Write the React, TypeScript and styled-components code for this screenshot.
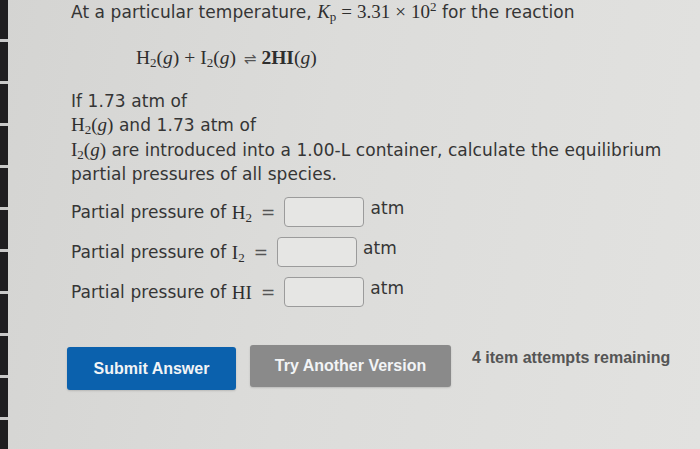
import styled, { createGlobalStyle } from 'styled-components';

const GlobalStyle = createGlobalStyle`
  html, body {
    margin: 0;
    padding: 0;
  }
  body {
    width: 700px;
    height: 449px;
    overflow: hidden;
    font-family: 'DejaVu Sans', Verdana, sans-serif;
  }
`;

const Screen = styled.div`
  display: flex;
  width: 700px;
  height: 449px;
  background: linear-gradient(100deg, #d4d4d2 0%, #dcdcda 45%, #e2e2e0 100%);
`;

const Bezel = styled.div`
  width: 8px;
  display: flex;
  flex-direction: column;
  gap: 3px;
  background: #c9c9c9;
`;

const BezelSegment = styled.div`
  height: 39px;
  flex-shrink: 0;
  background: #1f1e20;
`;

const Content = styled.div`
  flex: 1;
  padding: 0 0 0 63px;
  color: #353535;
  font-size: 17px;
  letter-spacing: 0.07px;
`;

const Line = styled.div`
  height: 24.5px;
  line-height: 24.5px;
  white-space: nowrap;
`;

const Math = styled.span<{ $italic?: boolean }>`
  font-family: 'Liberation Serif', 'Times New Roman', serif;
  font-size: 19px;
  line-height: 1;
  letter-spacing: 0;
  font-style: ${(p) => (p.$italic ? 'italic' : 'normal')};
  color: #2e2e2e;
`;

const Sub = styled.sub`
  font-size: 13px;
  line-height: 0;
  vertical-align: -3px;
  font-style: normal;
`;

const Sup = styled.sup`
  font-size: 13px;
  line-height: 0;
  vertical-align: 7px;
`;

const Op = styled.span`
  margin: 0 5px;
`;

const Equation = styled.div`
  height: 24px;
  padding: 21.5px 0 0 65px;
  line-height: 24px;
  font-family: 'Liberation Serif', 'Times New Roman', serif;
  font-size: 19.5px;
  letter-spacing: 0;
  color: #2e2e2e;
  white-space: nowrap;
`;

const Arrow = styled.span`
  font-family: 'DejaVu Sans', sans-serif;
  font-size: 15px;
  color: #555;
  margin: 0 5px 0 3px;
`;

const Paragraph = styled.div`
  margin-top: 18.75px;
`;

const Rows = styled.div`
  margin-top: 10.25px;
  display: flex;
  flex-direction: column;
  gap: 10px;
`;

const Row = styled.div`
  display: flex;
  align-items: center;
  height: 30px;
  white-space: nowrap;
`;

const Equals = styled.span`
  margin: 0 9px 0 9px;
  color: #555;
`;

const AnswerBox = styled.div`
  width: 78px;
  height: 28px;
  border: 1px solid #9b9b9b;
  border-radius: 4px;
  background: #e6e6e4;
`;

const Unit = styled.span`
  margin-left: 6px;
  position: relative;
  top: -4px;
`;

const Actions = styled.div`
  display: flex;
  align-items: flex-start;
  margin: 38px 0 0 -4px;
`;

const Button = styled.button<{ $variant: 'primary' | 'secondary' }>`
  border: none;
  border-radius: 3px;
  font-family: 'Liberation Sans', Arial, sans-serif;
  font-weight: bold;
  font-size: 16px;
  color: #f2f4f6;
  padding: 0;
  margin-top: ${(p) => (p.$variant === 'primary' ? '2px' : '0')};
  width: ${(p) => (p.$variant === 'primary' ? '169px' : '201px')};
  height: ${(p) => (p.$variant === 'primary' ? '43px' : '42px')};
  background: ${(p) => (p.$variant === 'primary' ? '#0b61ad' : '#8a8a8a')};
  box-shadow: 0 1px 2px rgba(0, 0, 0, 0.15);
`;

const Gap = styled.div`
  width: 14px;
`;

const Attempts = styled.span`
  margin: 4px 0 0 21px;
  font-family: 'Liberation Sans', Arial, sans-serif;
  font-weight: bold;
  font-size: 16px;
  letter-spacing: 0;
  color: #555;
`;

function App() {
  return (
    <>
      <GlobalStyle />
      <Screen>
        <Bezel>
          {Array.from({ length: 11 }).map((_, i) => (
            <BezelSegment key={i} />
          ))}
        </Bezel>
        <Content>
          <Line>
            At a particular temperature,{' '}
            <Math $italic>
              K<Sub>p</Sub>
            </Math>
            <Math>
              <Op>=</Op>3.31<Op>×</Op>10<Sup>2</Sup>
            </Math>{' '}
            for the reaction
          </Line>
          <Equation>
            H<Sub>2</Sub>(<i>g</i>)<Op>+</Op>I<Sub>2</Sub>(<i>g</i>)
            <Arrow> ⇌</Arrow>
            <b>2HI</b>(<i>g</i>)
          </Equation>
          <Paragraph>
            <Line>If 1.73 atm of</Line>
            <Line>
              <Math>
                H<Sub>2</Sub>(<i>g</i>)
              </Math>{' '}
              and 1.73 atm of
            </Line>
            <Line>
              <Math>
                I<Sub>2</Sub>(<i>g</i>)
              </Math>{' '}
              are introduced into a 1.00-L container, calculate the equilibrium
            </Line>
            <Line>partial pressures of all species.</Line>
          </Paragraph>
          <Rows>
            <Row>
              Partial pressure of&nbsp;
              <Math>
                H<Sub>2</Sub>
              </Math>
              <Equals>=</Equals>
              <AnswerBox />
              <Unit>atm</Unit>
            </Row>
            <Row>
              Partial pressure of&nbsp;
              <Math>
                I<Sub>2</Sub>
              </Math>
              <Equals>=</Equals>
              <AnswerBox />
              <Unit>atm</Unit>
            </Row>
            <Row>
              Partial pressure of&nbsp;
              <Math>HI</Math>
              <Equals>=</Equals>
              <AnswerBox />
              <Unit>atm</Unit>
            </Row>
          </Rows>
          <Actions>
            <Button $variant="primary">Submit Answer</Button>
            <Gap />
            <Button $variant="secondary">Try Another Version</Button>
            <Attempts>4 item attempts remaining</Attempts>
          </Actions>
        </Content>
      </Screen>
    </>
  );
}

export default App;
